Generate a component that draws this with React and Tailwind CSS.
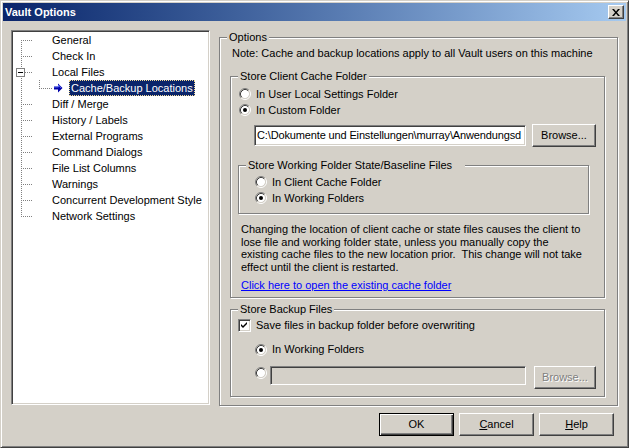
import React from 'react';

const SUNKEN =
  'border border-t-[#808080] border-l-[#808080] border-r-white border-b-white shadow-[inset_1px_1px_0_#404040,inset_-1px_-1px_0_#d4d0c8]';
const RAISED =
  'border border-t-white border-l-white border-r-[#404040] border-b-[#404040] shadow-[inset_-1px_-1px_0_#808080]';
const ETCHED =
  'border border-[#808080] shadow-[inset_1px_1px_0_#fff,1px_1px_0_#fff] min-w-0';
const LEGEND = 'ml-[7px] px-[2px] leading-[13px] bg-[#d4d0c8]';

const TREE = [
  { label: 'General', first: true },
  { label: 'Check In' },
  { label: 'Local Files', expand: true },
  { label: 'Cache/Backup Locations', child: true },
  { label: 'Diff / Merge' },
  { label: 'History / Labels' },
  { label: 'External Programs' },
  { label: 'Command Dialogs' },
  { label: 'File List Columns' },
  { label: 'Warnings' },
  { label: 'Concurrent Development Style' },
  { label: 'Network Settings', last: true },
];

function Radio({ checked }) {
  return (
    <svg width="12" height="12" viewBox="0 0 12 12" className="shrink-0">
      <circle cx="6" cy="6" r="4.2" fill="#fff" />
      <path d="M2.11 9.89A5.5 5.5 0 0 1 9.89 2.11" stroke="#808080" fill="none" />
      <path d="M9.89 2.11A5.5 5.5 0 0 1 2.11 9.89" stroke="#fff" fill="none" />
      <path d="M2.82 9.18A4.5 4.5 0 0 1 9.18 2.82" stroke="#404040" fill="none" />
      <path d="M9.18 2.82A4.5 4.5 0 0 1 2.82 9.18" stroke="#d4d0c8" fill="none" />
      {checked && <circle cx="6" cy="6" r="2" fill="#000" />}
    </svg>
  );
}

function RadioRow({ checked, children }) {
  return (
    <div className="flex items-center gap-[5px] h-[16px]">
      <Radio checked={checked} />
      <span>{children}</span>
    </div>
  );
}

function Checkbox() {
  return (
    <div className={`w-[13px] h-[13px] bg-white shrink-0 flex items-center justify-center ${SUNKEN}`}>
      <svg width="7" height="7" viewBox="0 0 7 7">
        <path d="M0 2 L2 4 L6 0 L6 2 L2 6 L0 4 Z" fill="#000" />
      </svg>
    </div>
  );
}

function TreeLines({ item }) {
  const w = item.child ? 57 : 40;
  const v1 = item.first ? 8 : 0;
  const v2 = item.last ? 8.5 : 16;
  return (
    <svg width={w} height="16" viewBox={`0 0 ${w} 16`} className="shrink-0">
      <g stroke="#808080" strokeDasharray="1 1">
        <line x1="9.5" y1={v1} x2="9.5" y2={v2} />
        {!item.child && <line x1="9" y1="8.5" x2="20" y2="8.5" />}
        {item.child && <line x1="27.5" y1="0" x2="27.5" y2="8" />}
        {item.child && <line x1="27" y1="8.5" x2="40" y2="8.5" />}
      </g>
      {item.expand && (
        <g>
          <rect x="4.5" y="4.5" width="8" height="8" fill="#fff" stroke="#808080" />
          <line x1="6" y1="8.5" x2="11" y2="8.5" stroke="#000" />
        </g>
      )}
      {item.child && (
        <g>
          <path d="M42 6.5 H46 V3.5 L50.5 8 L46 12.5 V9.5 H42 Z" fill="#0000a8" />
          <path d="M42 7 H46.5 V5 L49 8" stroke="#6b7dff" fill="none" strokeWidth="0.8" />
        </g>
      )}
    </svg>
  );
}

function Button({ children, isDefault, disabled, className = '' }) {
  const edge = isDefault
    ? 'border border-black shadow-[inset_1px_1px_0_#fff,inset_-1px_-1px_0_#404040,inset_-2px_-2px_0_#808080]'
    : RAISED;
  return (
    <div
      className={`h-[23px] flex items-center justify-center bg-[#d4d0c8] ${edge} ${
        disabled ? 'text-[#808080] [text-shadow:1px_1px_0_#fff]' : ''
      } ${className}`}
    >
      {children}
    </div>
  );
}

export default function App() {
  return (
    <div className="w-[629px] h-[448px] bg-[#d4d0c8] border border-t-[#d4d0c8] border-l-[#d4d0c8] border-r-[#404040] border-b-[#404040] shadow-[inset_1px_1px_0_#fff,inset_-1px_-1px_0_#808080] p-[2px] flex flex-col font-['Liberation_Sans',Arial,sans-serif] text-[11px] leading-[13px] text-black overflow-hidden">
      {/* title bar */}
      <div className="h-[18px] flex items-center justify-between bg-linear-to-r from-[#0a246a] to-[#a6caf0] pl-[2px] pr-[2px] shrink-0">
        <span className="text-white font-bold">Vault Options</span>
        <div className={`w-[16px] h-[14px] bg-[#d4d0c8] flex items-center justify-center ${RAISED}`}>
          <svg width="8" height="7" viewBox="0 0 8 7">
            <path d="M0 0h2l2 2.4 2-2.4h2l-3 3.5 3 3.5h-2l-2-2.4-2 2.4h-2l3-3.5z" fill="#000" />
          </svg>
        </div>
      </div>

      {/* body */}
      <div className="flex pt-[9px] pl-[8px] gap-[9px]">
        {/* tree */}
        <div className={`w-[199px] h-[375px] pt-[1px] bg-white shrink-0 ${SUNKEN}`}>
          {TREE.map((item) => (
            <div key={item.label} className="flex items-center h-[16px]">
              <TreeLines item={item} />
              {item.child ? (
                <span className="h-[16px] flex items-center px-[1px] bg-[#0a246a] text-white border border-dotted border-[#f5db95] whitespace-nowrap">
                  {item.label}
                </span>
              ) : (
                <span className="whitespace-nowrap">{item.label}</span>
              )}
            </div>
          ))}
        </div>

        {/* options */}
        <fieldset className={`w-[399px] h-[375px] mt-[1px] shrink-0 ${ETCHED}`}>
          <legend className={LEGEND}>Options</legend>
          <div className="pl-[12px] pt-[3px] whitespace-nowrap">
            Note: Cache and backup locations apply to all Vault users on this machine
          </div>

          <div className="pl-[10px] flex flex-col">
            {/* client cache */}
            <fieldset className={`w-[375px] mt-[10px] ${ETCHED}`}>
              <legend className={LEGEND}>Store Client Cache Folder</legend>
              <div className="pl-[8px] pt-[3px]">
                <RadioRow>In User Local Settings Folder</RadioRow>
                <RadioRow checked>In Custom Folder</RadioRow>
              </div>
              <div className="flex items-center pl-[23px] mt-[6px] gap-[6px]">
                <div className={`w-[272px] h-[21px] bg-white flex items-center pl-[2px] overflow-hidden whitespace-nowrap tracking-[-0.14px] ${SUNKEN}`}>
                  C:\Dokumente und Einstellungen\murray\Anwendungsd
                </div>
                <Button className="w-[64px]">Browse...</Button>
              </div>

              {/* working folder */}
              <fieldset className={`w-[351px] ml-[7px] mt-[12px] ${ETCHED}`}>
                <legend className={`${LEGEND} pr-[13px]`}>Store Working Folder State/Baseline Files</legend>
                <div className="pl-[16px] pt-[2px] pb-[7px]">
                  <RadioRow>In Client Cache Folder</RadioRow>
                  <RadioRow checked>In Working Folders</RadioRow>
                </div>
              </fieldset>

              <p className="pl-[10px] mt-[9px] leading-[12.67px] whitespace-nowrap">
                Changing the location of client cache or state files causes the client to
                <br />
                lose file and working folder state, unless you manually copy the
                <br />
                existing cache files to the new location prior.&nbsp; This change will not take
                <br />
                effect until the client is restarted.
              </p>
              <div className="pl-[10px] mt-[5px] pb-[5px]">
                <span className="text-[#0000ff] underline">Click here to open the existing cache folder</span>
              </div>
            </fieldset>

            {/* backup */}
            <fieldset className={`w-[375px] mt-[5px] ${ETCHED}`}>
              <legend className={LEGEND}>Store Backup Files</legend>
              <div className="pl-[7px] pt-[2px] flex items-center gap-[5px] h-[16px] box-content">
                <Checkbox />
                <span>Save files in backup folder before overwriting</span>
              </div>
              <div className="pl-[24px] mt-[8px]">
                <RadioRow checked>In Working Folders</RadioRow>
              </div>
              <div className="pl-[24px] mt-[8px] pb-[7px] flex items-start">
                <div className="mt-[1px]">
                  <Radio />
                </div>
                <div className={`w-[256px] h-[19px] ml-[3px] ${SUNKEN}`} />
                <Button disabled className="w-[62px] ml-[8px]">Browse...</Button>
              </div>
            </fieldset>
          </div>
        </fieldset>
      </div>

      {/* buttons */}
      <div className="flex justify-end gap-[5px] pr-[12px] mt-[7px]">
        <Button isDefault className="w-[75px]">OK</Button>
        <Button className="w-[75px]">
          <span>
            <span className="underline">C</span>ancel
          </span>
        </Button>
        <Button className="w-[75px]">
          <span>
            <span className="underline">H</span>elp
          </span>
        </Button>
      </div>
    </div>
  );
}
